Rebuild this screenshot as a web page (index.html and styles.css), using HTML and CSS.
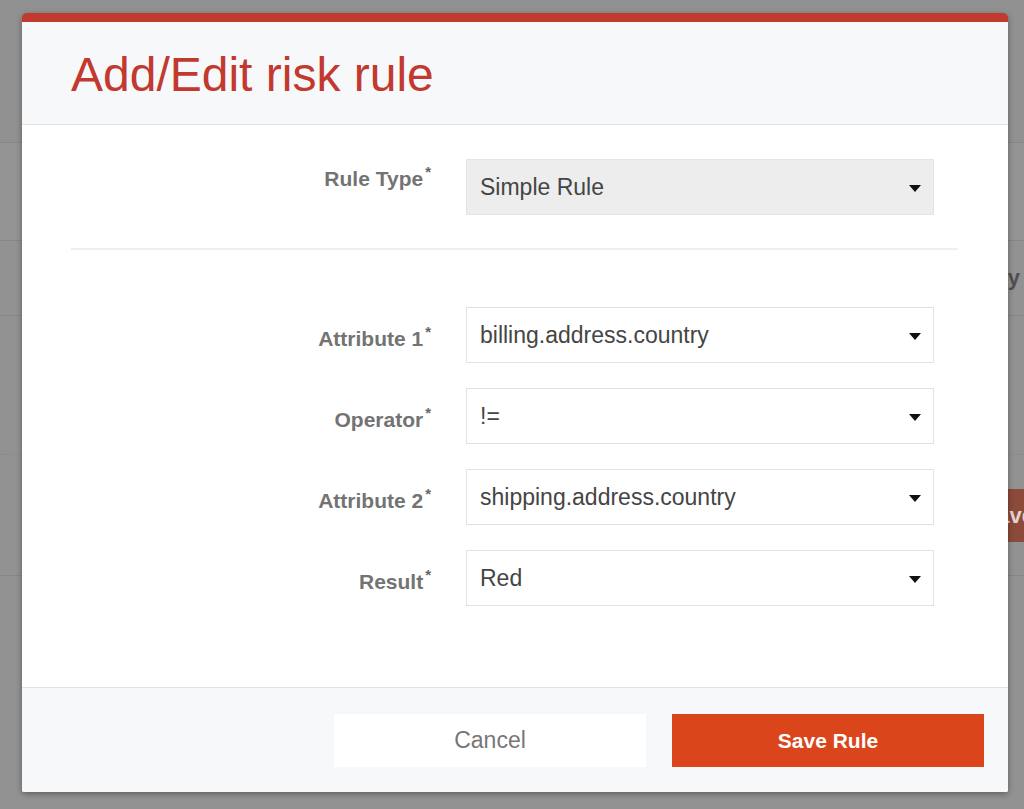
FILE: index.html
```html
<!DOCTYPE html>
<html>
<head>
<meta charset="utf-8">
<link rel="stylesheet" href="styles.css">
</head>
<body>
<div class="page">
  <div class="pg-row pg-r1"></div>
  <div class="pg-row pg-r2"></div>
  <div class="pg-row pg-r3"><span class="pg-head">Priority</span></div>
  <div class="pg-row pg-r4"></div>
  <div class="pg-row pg-r5"><span class="pg-btn">Save</span></div>
  <div class="pg-row pg-r6"></div>
</div>

<div class="modal">
  <div class="modal-header">
    <h1 class="modal-title">Add/Edit risk rule</h1>
  </div>
  <div class="modal-body">
    <div class="field field-type">
      <label class="field-label">Rule Type<sup class="req">*</sup></label>
      <div class="select select-grey">Simple Rule</div>
    </div>
    <div class="divider"></div>
    <div class="fields">
      <div class="field">
        <label class="field-label">Attribute 1<sup class="req">*</sup></label>
        <div class="select">billing.address.country</div>
      </div>
      <div class="field">
        <label class="field-label">Operator<sup class="req">*</sup></label>
        <div class="select">!=</div>
      </div>
      <div class="field">
        <label class="field-label">Attribute 2<sup class="req">*</sup></label>
        <div class="select">shipping.address.country</div>
      </div>
      <div class="field">
        <label class="field-label">Result<sup class="req">*</sup></label>
        <div class="select">Red</div>
      </div>
    </div>
  </div>
  <div class="modal-footer">
    <button class="btn btn-cancel">Cancel</button>
    <button class="btn btn-save">Save Rule</button>
  </div>
</div>
</body>
</html>
```

FILE: styles.css
```css
* { box-sizing: border-box; }
html, body {
  margin: 0;
  padding: 0;
  width: 1024px;
  height: 809px;
  overflow: hidden;
  background: #929292;
  font-family: "Liberation Sans", Arial, Helvetica, sans-serif;
}

/* dimmed page behind the dialog */
.page {
  display: flex;
  flex-direction: column;
  width: 1024px;
}
.pg-row {
  display: flex;
  align-items: center;
  justify-content: flex-end;
  border-bottom: 1px solid #868686;
  overflow: visible;
}
.pg-r1 { height: 143px; background: #919191; }
.pg-r2 { height: 98px; background: #949494; }
.pg-r3 { height: 75px; background: #929292; }
.pg-r4 { height: 139px; background: #929292; border-bottom: 1px dashed #8a8a8a; }
.pg-r5 { height: 121px; background: #929292; }
.pg-r6 { height: 234px; border-bottom: none; }
.pg-head {
  font-size: 22px;
  font-weight: bold;
  color: #4f4f4f;
  padding-right: 4px;
}
.pg-btn {
  height: 53px;
  line-height: 53px;
  padding: 0 20px;
  margin-right: -30px;
  background: #8c4a3a;
  color: #e6d3cd;
  font-size: 22px;
  font-weight: bold;
}

/* dialog */
.modal {
  position: absolute;
  left: 22px;
  top: 13px;
  width: 986px;
  border-top: 9px solid #c1392f;
  border-radius: 5px 5px 2px 2px;
  background: #ffffff;
  box-shadow: 0 2px 6px rgba(0, 0, 0, 0.35);
  overflow: hidden;
}
.modal-header {
  height: 103px;
  padding: 25px 0 0 49px;
  background: #f7f8fa;
  border-bottom: 1px solid #e3e3e3;
}
.modal-title {
  margin: 0;
  font-size: 48px;
  line-height: 56px;
  font-weight: normal;
  color: #c1392f;
}
.modal-body {
  padding: 34px 74px 81px 49px;
  background: #ffffff;
}
.field {
  display: grid;
  grid-template-columns: 361px 468px;
  column-gap: 34px;
  align-items: start;
}
.field-label {
  text-align: right;
  font-size: 21px;
  line-height: 24px;
  font-weight: bold;
  color: #737373;
  padding-top: 20px;
  padding-right: 1px;
}
.field-type .field-label { padding-top: 8px; }
.req {
  font-size: 15px;
  line-height: 0;
  margin-left: 2px;
  vertical-align: 9px;
  color: #666666;
}
.select {
  position: relative;
  height: 56px;
  line-height: 54px;
  padding-left: 13px;
  border: 1px solid #e2e2e2;
  background: #ffffff;
  font-size: 23px;
  color: #454545;
}
.select::after {
  content: "";
  position: absolute;
  right: 12px;
  top: 25px;
  border-left: 6px solid transparent;
  border-right: 6px solid transparent;
  border-top: 7px solid #111111;
}
.select-grey {
  background: #ededed;
  border-color: #e4e4e4;
}
.divider {
  height: 2px;
  margin: 33px -24px 57px 0;
  background: #efefef;
}
.fields {
  display: flex;
  flex-direction: column;
  gap: 25px;
}

.modal-footer {
  display: flex;
  justify-content: flex-end;
  gap: 26px;
  height: 105px;
  padding: 26px 24px 0 0;
  background: #f7f8fa;
  border-top: 1px solid #e3e3e3;
}
.btn {
  width: 312px;
  height: 53px;
  border: none;
  margin: 0;
  font-family: "Liberation Sans", Arial, Helvetica, sans-serif;
  font-size: 23px;
  cursor: pointer;
}
.btn-cancel {
  background: #ffffff;
  color: #777777;
}
.btn-save {
  background: #da451c;
  color: #ffffff;
  font-weight: bold;
  font-size: 21px;
}
```
